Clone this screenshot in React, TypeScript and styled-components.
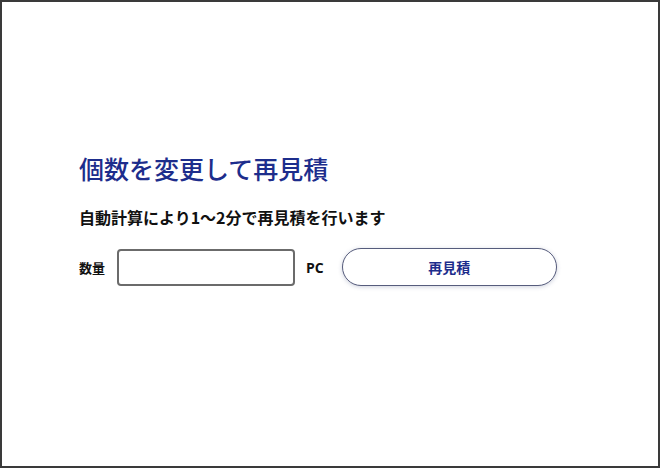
import React from 'react'
import styled, { createGlobalStyle } from 'styled-components'

const GlobalStyle = createGlobalStyle`
  html, body {
    margin: 0;
    padding: 0;
    background: #ffffff;
  }
  * {
    box-sizing: border-box;
  }
`

const Frame = styled.div`
  width: 660px;
  height: 468px;
  border: 2px solid #3a3a3a;
  background: #ffffff;
  padding: 151px 0 0 77px;
  font-family: 'Noto Sans CJK JP', 'Noto Sans', sans-serif;
  color: #111111;
`

const Title = styled.h1`
  margin: 0;
  font-size: 25px;
  line-height: 30px;
  font-weight: 500;
  color: #1d2d8c;
  letter-spacing: 0;
`

const Lead = styled.p`
  margin: 23px 0 0;
  font-size: 16px;
  line-height: 22px;
  font-weight: 700;
  color: #111111;
`

const Row = styled.div`
  display: flex;
  align-items: center;
  margin-top: 20px;
  height: 38px;
`

const Label = styled.label`
  font-size: 13px;
  font-weight: 700;
  margin-right: 12px;
`

const QtyInput = styled.input`
  width: 178px;
  height: 37px;
  border: 2px solid #6b6b6b;
  border-radius: 4px;
  padding: 0 8px;
  font-size: 14px;
  outline: none;
`

const Unit = styled.span`
  font-family: 'Open Sans', 'Noto Sans', sans-serif;
  font-size: 14px;
  font-weight: 700;
  margin: 0 18px 0 11px;
`

const EstimateButton = styled.button`
  width: 215px;
  height: 38px;
  border: 1.5px solid #565c7c;
  border-radius: 19px;
  background: #ffffff;
  box-shadow: 0 1px 4px rgba(60, 70, 120, 0.25);
  color: #1d2d8c;
  font-family: 'Noto Sans CJK JP', sans-serif;
  font-size: 14px;
  font-weight: 700;
  cursor: pointer;
`

function App() {
  return (
    <>
      <GlobalStyle />
      <Frame>
        <Title>個数を変更して再見積</Title>
        <Lead>自動計算により1〜2分で再見積を行います</Lead>
        <Row>
          <Label htmlFor='qty'>数量</Label>
          <QtyInput id='qty' type='text' />
          <Unit>PC</Unit>
          <EstimateButton>再見積</EstimateButton>
        </Row>
      </Frame>
    </>
  )
}

export default App
